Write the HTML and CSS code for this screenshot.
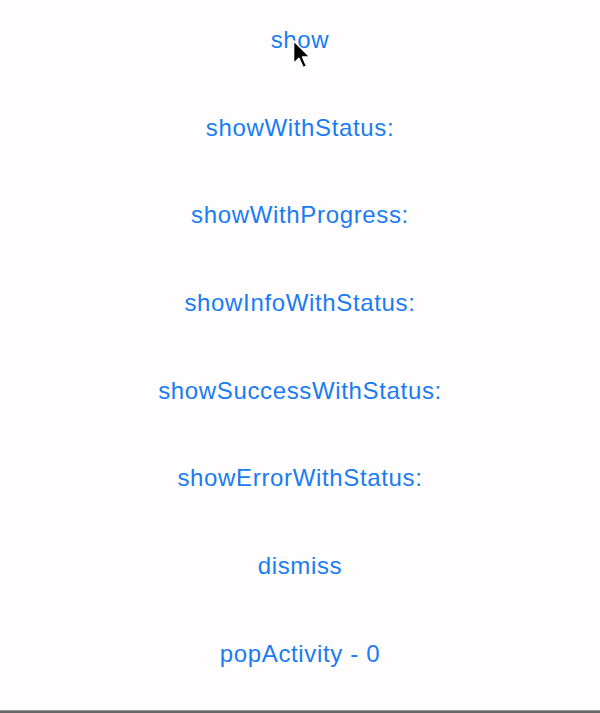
FILE: index.html
```html
<!DOCTYPE html>
<html>
<head>
<meta charset="utf-8">
<link rel="stylesheet" href="styles.css">
</head>
<body>
<div class="screen">
  <ul class="actions">
    <li class="action"><span class="label">show</span></li>
    <li class="action"><span class="label">showWithStatus:</span></li>
    <li class="action"><span class="label">showWithProgress:</span></li>
    <li class="action"><span class="label">showInfoWithStatus:</span></li>
    <li class="action"><span class="label">showSuccessWithStatus:</span></li>
    <li class="action"><span class="label">showErrorWithStatus:</span></li>
    <li class="action"><span class="label">dismiss</span></li>
    <li class="action"><span class="label">popActivity - 0</span></li>
  </ul>
  <div class="bottom-edge"></div>
  <svg class="cursor" width="20" height="31" viewBox="0 0 19 29">
    <path d="M1.5 1.5 L1.5 23 L6.6 18 L10.6 27 L13.8 25.5 L10 16.8 L17 16.8 Z" fill="#000" stroke="#fff" stroke-width="1.4" stroke-linejoin="round"/>
  </svg>
</div>
</body>
</html>
```
FILE: styles.css
```css
html, body {
  margin: 0;
  padding: 0;
  background: #fffdfe;
}
.screen {
  position: relative;
  width: 600px;
  height: 713px;
  display: flex;
  flex-direction: column;
  overflow: hidden;
}
.actions {
  list-style: none;
  margin: -4px 0 0 0;
  padding: 0;
  flex: 1;
}
.action {
  height: 87.7px;
  display: flex;
  align-items: center;
  justify-content: center;
}
.label {
  font-family: "Liberation Sans", Arial, sans-serif;
  font-size: 24px;
  letter-spacing: 0.65px;
  color: #1a7cf3;
  line-height: 1;
}
.bottom-edge {
  height: 1px;
  background: #9a9a9a;
  border-bottom: 2px solid #666;
}
.cursor {
  position: absolute;
  left: 292px;
  top: 39px;
}
```
